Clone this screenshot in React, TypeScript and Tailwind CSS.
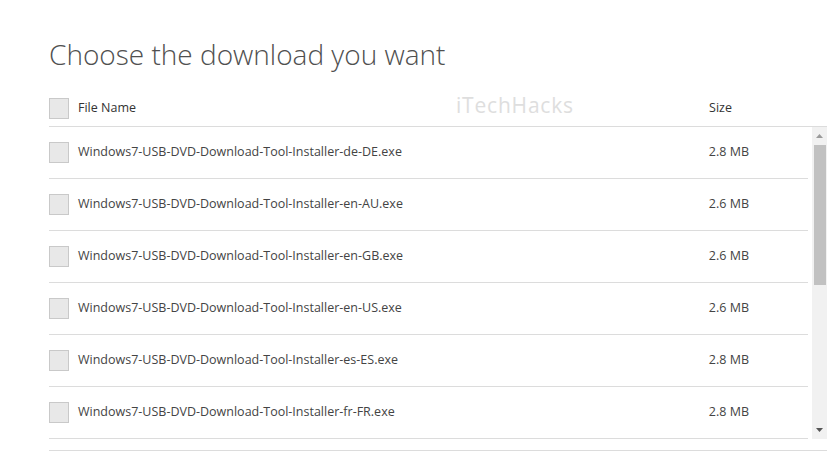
import React from 'react';

const files = [
  { name: 'Windows7-USB-DVD-Download-Tool-Installer-de-DE.exe', size: '2.8 MB' },
  { name: 'Windows7-USB-DVD-Download-Tool-Installer-en-AU.exe', size: '2.6 MB' },
  { name: 'Windows7-USB-DVD-Download-Tool-Installer-en-GB.exe', size: '2.6 MB' },
  { name: 'Windows7-USB-DVD-Download-Tool-Installer-en-US.exe', size: '2.6 MB' },
  { name: 'Windows7-USB-DVD-Download-Tool-Installer-es-ES.exe', size: '2.8 MB' },
  { name: 'Windows7-USB-DVD-Download-Tool-Installer-fr-FR.exe', size: '2.8 MB' },
];

const Box = () => (
  <div className="w-[20px] h-[21px] shrink-0 border border-[#c9c9c9] bg-[#e8e8e8]" />
);

export default function App() {
  return (
    <div className="w-[839px] h-[467px] bg-white overflow-hidden pl-[49px] pr-[12px] font-['Open_Sans',sans-serif] text-[#444]">
      <h1 className="pt-[34px] h-[90px] text-[28px] font-light text-[#505050] leading-[40px]">
        Choose the download you want
      </h1>

      <div className="relative flex items-center h-[37px] pt-[1px] border-b border-[#dcdcdc]">
        <Box />
        <span className="ml-[9px] text-[12.5px] text-[#333]">File Name</span>
        <span className="absolute left-[407px] top-[0px] text-[21px] text-[#dedede] tracking-[0.8px]">iTechHacks</span>
        <span className="ml-auto mr-[95px] text-[12.5px] text-[#333]">Size</span>
      </div>

      <div className="flex h-[312px]">
        <div className="flex-1">
          {files.map((f) => (
            <div key={f.name} className="flex items-center h-[52px] border-b border-[#dcdcdc]">
              <Box />
              <span className="ml-[9px] text-[12.5px]">{f.name}</span>
              <span className="ml-auto mr-[59px] text-[12.5px]">{f.size}</span>
            </div>
          ))}
        </div>
        <div className="w-[15px] ml-[4px] bg-[#f1f1f1] flex flex-col items-center">
          <div className="h-[18px] flex items-center justify-center">
            <svg width="7" height="4" viewBox="0 0 7 4"><path d="M0 4 L3.5 0 L7 4 Z" fill="#9a9a9a" /></svg>
          </div>
          <div className="w-[12px] h-[140px] bg-[#c1c1c1]" />
          <div className="flex-1" />
          <div className="h-[18px] flex items-center justify-center">
            <svg width="7" height="4" viewBox="0 0 7 4"><path d="M0 0 L7 0 L3.5 4 Z" fill="#555" /></svg>
          </div>
        </div>
      </div>

      <div className="mt-[11px] border-b border-[#dcdcdc]" />
    </div>
  );
}
